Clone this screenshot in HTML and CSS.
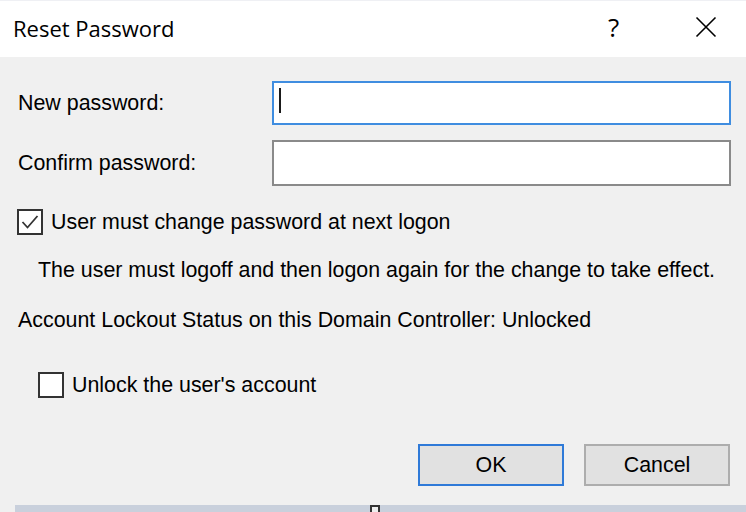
FILE: index.html
```html
<!DOCTYPE html>
<html>
<head>
<meta charset="utf-8">
<link rel="stylesheet" href="styles.css">
</head>
<body>
<div class="dialog">
  <div class="titlebar">
    <span class="title">Reset Password</span>
    <span class="help">?</span>
    <span class="close">
      <svg width="22" height="22" viewBox="0 0 22 22"><path d="M1.5 1.5 L20.5 20.5 M20.5 1.5 L1.5 20.5" stroke="#000" stroke-width="1.6" fill="none"/></svg>
    </span>
  </div>
  <div class="content">
    <div class="field row1">
      <label class="label">New password:</label>
      <div class="input focused"><span class="caret"></span></div>
    </div>
    <div class="field row2">
      <label class="label">Confirm password:</label>
      <div class="input"></div>
    </div>
    <div class="check row3">
      <span class="box">
        <svg width="22" height="22" viewBox="0 0 22 22"><path d="M3.5 11 L8.5 16.5 L18.5 5" stroke="#333" stroke-width="1.8" fill="none"/></svg>
      </span>
      <span class="text">User must change password at next logon</span>
    </div>
    <div class="note">The user must logoff and then logon again for the change to take effect.</div>
    <div class="status">Account Lockout Status on this Domain Controller: Unlocked</div>
    <div class="check row4">
      <span class="box"></span>
      <span class="text">Unlock the user's account</span>
    </div>
    <div class="buttons">
      <button class="btn default">OK</button>
      <button class="btn">Cancel</button>
    </div>
  </div>
  <div class="bottom"><span class="grip"></span></div>
</div>
</body>
</html>
```

FILE: styles.css
```css
* { box-sizing: border-box; }
html, body { margin: 0; padding: 0; }
body {
  width: 746px;
  height: 512px;
  overflow: hidden;
  background: #f0f0f0;
  font-family: "Liberation Sans", Arial, sans-serif;
  font-size: 21.4px;
  color: #000;
}
.dialog { display: flex; flex-direction: column; height: 512px; }
.titlebar {
  height: 57px;
  background: #fff;
  border-top: 1px solid #eff0f4;
  display: flex;
  align-items: center;
  padding-left: 13px;
  flex-shrink: 0;
}
.title {
  font-family: "Open Sans", "Noto Sans", sans-serif;
  font-size: 22px;
  flex: 1;
  padding-bottom: 2px;
}
.help {
  font-family: "Open Sans", sans-serif;
  font-size: 26px;
  width: 87px;
  padding-bottom: 4px;
}
.close { width: 51px; display: flex; padding-bottom: 4px; }
.content { padding-left: 18px; padding-right: 16px; display: flex; flex-direction: column; }
.field { display: flex; align-items: center; }
.label { width: 254px; flex-shrink: 0; }
.row1 { margin-top: 24px; height: 44px; }
.row2 { margin-top: 15px; height: 46px; }
.input {
  width: 459px;
  flex-shrink: 0;
  height: 100%;
  background: #fff;
  border: 2px solid #8a8a8a;
  display: flex;
  align-items: center;
  padding-left: 5px;
}
.input.focused { border-color: #3f8de0; }
.caret { width: 2px; height: 25px; background: #1a1a1a; margin-top: -6px; }
.check { display: flex; align-items: center; height: 26px; }
.box {
  width: 26px;
  height: 26px;
  border: 2px solid #333;
  background: #fff;
  display: flex;
  align-items: center;
  justify-content: center;
  margin-right: 8px;
  flex-shrink: 0;
}
.row3 { margin-top: 23px; margin-left: -1px; }
.note { margin-top: 23px; height: 24px; line-height: 24px; margin-left: 20px; }
.status { margin-top: 26px; height: 24px; line-height: 24px; }
.row4 { margin-top: 40px; margin-left: 20px; }
.buttons { display: flex; justify-content: flex-end; gap: 20px; margin-top: 46px; }
.btn {
  width: 146px;
  height: 42px;
  background: #e1e1e1;
  border: 2px solid #adadad;
  font-family: "Liberation Sans", Arial, sans-serif;
  font-size: 21.4px;
  color: #000;
  padding: 0;
}
.btn.default { border-color: #2f7ad8; }
.bottom {
  margin-top: auto;
  height: 7px;
  margin-left: 15px;
  background: #c9d0dc;
  position: relative;
}
.grip {
  position: absolute;
  left: 355px;
  top: 0;
  width: 10px;
  height: 7px;
  border: 2px solid #333;
  border-bottom: none;
  background: #eee;
}
```
